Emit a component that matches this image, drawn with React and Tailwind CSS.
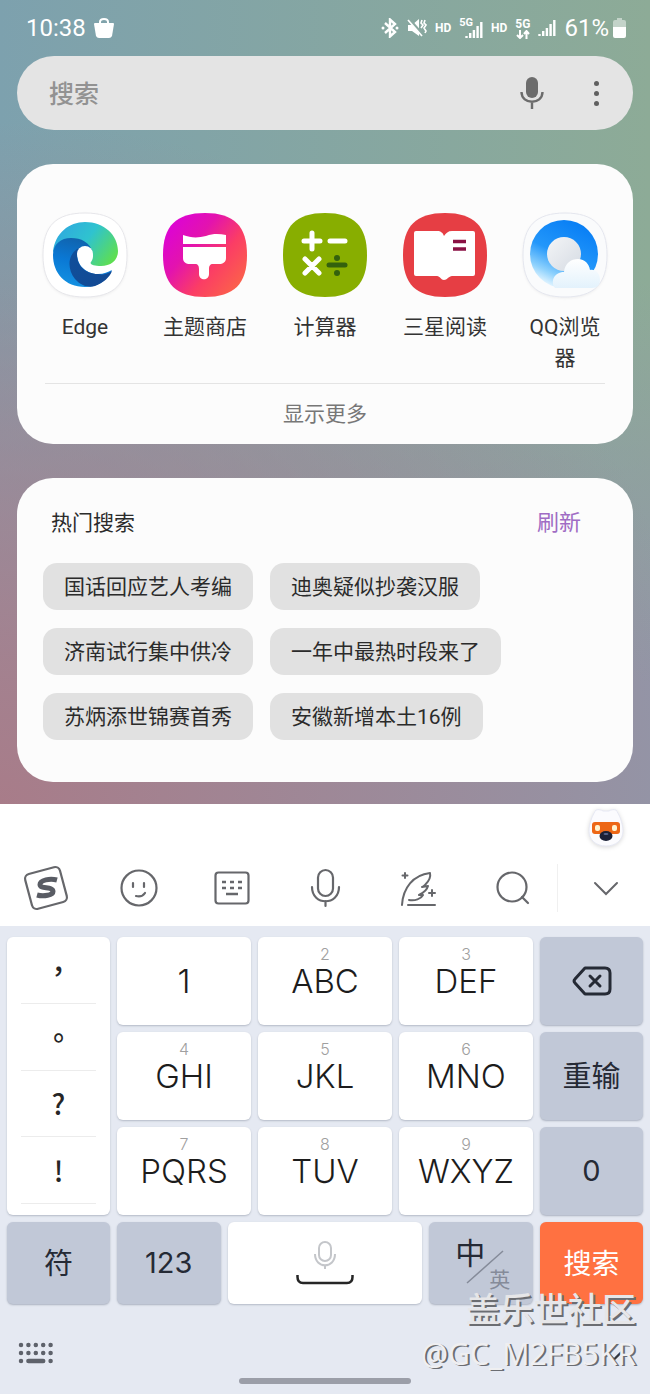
import React, { useState } from "react";
import { ChevronDown } from "lucide-react";

const SQUIRCLE = "M42 0C71 0 84 13 84 42S71 84 42 84 0 71 0 42 13 0 42 0Z";

const EdgeIcon = () => (
  <svg viewBox="0 0 84 84" className="size-[84px] overflow-visible drop-shadow-xs" aria-hidden="true">
    <defs>
      <linearGradient id="edgeTop" x1="0" y1="0.2" x2="1" y2="0.7">
        <stop offset="0" stopColor="#2fa8e0" />
        <stop offset="0.5" stopColor="#2fc3cf" />
        <stop offset="1" stopColor="#5ede52" />
      </linearGradient>
      <linearGradient id="edgeWave" x1="0.6" y1="0" x2="0.3" y2="1">
        <stop offset="0" stopColor="#1160a8" />
        <stop offset="0.5" stopColor="#0a78d4" />
        <stop offset="1" stopColor="#1492e2" />
      </linearGradient>
      <linearGradient id="edgeDeep" x1="0" y1="0" x2="1" y2="0.6">
        <stop offset="0" stopColor="#0f4f9b" />
        <stop offset="1" stopColor="#134a94" />
      </linearGradient>
    </defs>
    <path d={SQUIRCLE} fill="#fff" stroke="#e6e6ea" />
    <path
      d="M10 39C12 20 26 9 42 9C61 9 75 22 75 38C75 48 67 53 58 53C51 53 46 51 48 49C50 46 50 44 50 42L42 30L20 30Z"
      fill="url(#edgeTop)"
    />
    <path
      d="M10 42C10 31 18 25 28 25C38 25 47 29 50 40C48 33 38 32 35 39C32 50 42 61 55 61C61 61 65 59 69 57C64 68 54 74 42 74C22 74 10 60 10 42Z"
      fill="url(#edgeWave)"
    />
    <path
      d="M38 34C25 39 23 55 32 66C38 73 46 75 52 73C60 70 67 64 69 58C64 61 60 62 55 61C42 61 34 52 34 42C34 38 36 36 38 34Z"
      fill="url(#edgeDeep)"
    />
    <circle cx="42" cy="41" r="8" fill="#fff" />
  </svg>
);

const ThemesIcon = () => (
  <svg viewBox="0 0 84 84" className="size-[84px]" aria-hidden="true">
    <defs>
      <linearGradient id="themes" x1="0.1" y1="0.2" x2="0.9" y2="0.85">
        <stop offset="0" stopColor="#dd06cf" />
        <stop offset="0.3" stopColor="#e313ae" />
        <stop offset="0.65" stopColor="#fb3d65" />
        <stop offset="1" stopColor="#fb5f4c" />
      </linearGradient>
    </defs>
    <path d={SQUIRCLE} fill="url(#themes)" />
    <path d="M20 22C28 25 35 25 43 23C51 20 57 21 63 22V31H20Z" fill="#fff" />
    <path
      d="M20 34H63V45C63 49 60 51 56 51H50C47 51 46 53 46 56V61C46 68 36 68 36 61V56C36 53 35 51 32 51H27C23 51 20 49 20 45Z"
      fill="#fff"
    />
  </svg>
);

const CalculatorIcon = () => (
  <svg viewBox="0 0 84 84" className="size-[84px]" fill="none" strokeWidth="5" strokeLinecap="round" aria-hidden="true">
    <path d={SQUIRCLE} fill="#88ae00" />
    <path d="M21 28H37M29 20V36M47 28H62M22 46L36 60M36 46L22 60" stroke="#fff" />
    <path d="M46 52H62" stroke="#34610d" />
    <circle cx="54" cy="45" r="3" fill="#34610d" />
    <circle cx="54" cy="60" r="3" fill="#34610d" />
  </svg>
);

const ReaderIcon = () => (
  <svg viewBox="0 0 84 84" className="size-[84px]" aria-hidden="true">
    <path d={SQUIRCLE} fill="#e63e44" />
    <path
      d="M13 18H34C38 18 40 20 41 23C43 20 45 18 49 18H70Q72 18 72 20V61Q72 63 70 63H49C46 63 44 67 41 67C38 67 37 63 34 63H13Q11 63 11 61V20Q11 18 13 18Z"
      fill="#fff"
    />
    <path d="M50 28.5H63M50 36H63" stroke="#8a1144" strokeWidth="3.5" />
  </svg>
);

const QQIcon = () => (
  <svg viewBox="0 0 84 84" className="size-[84px] overflow-visible drop-shadow-xs" aria-hidden="true">
    <defs>
      <linearGradient id="qqRing" x1="0.75" y1="0.1" x2="0.3" y2="1">
        <stop offset="0" stopColor="#0a80f5" />
        <stop offset="0.5" stopColor="#2397fa" />
        <stop offset="0.8" stopColor="#8fd2fd" />
        <stop offset="1" stopColor="#f0faff" />
      </linearGradient>
      <linearGradient id="qqSun" x1="0" y1="0" x2="1" y2="1">
        <stop offset="0" stopColor="#f4f5f7" />
        <stop offset="1" stopColor="#d5dbe3" />
      </linearGradient>
      <linearGradient id="qqCloud" x1="0.5" y1="0" x2="0.5" y2="1">
        <stop offset="0" stopColor="#fff" />
        <stop offset="1" stopColor="#e3f2fc" />
      </linearGradient>
    </defs>
    <path d={SQUIRCLE} fill="#fafbfc" stroke="#e4e6ee" />
    <circle cx="41" cy="41" r="34" fill="url(#qqRing)" />
    <circle cx="41" cy="41" r="17" fill="url(#qqSun)" />
    <path
      d="M32 75C27 69 31 59 41 59C42 50 48 46 55 46C62 46 66 51 67 57C73 56 77 61 77 67C77 72 74 75 69 75Z"
      fill="url(#qqCloud)"
    />
  </svg>
);

const SignalBars = ({ className }) => (
  <svg viewBox="0 0 18 18" className={className} stroke="#fff" strokeWidth="2.4" aria-hidden="true">
    <path d="M1.5 17V15M5.2 17V12M8.9 17V9M12.6 17V5M16.3 17V1" />
  </svg>
);

const StatusBar = () => (
  <div className="flex h-14 items-center justify-between pr-6 pl-[26px] text-white">
    <div className="flex items-center gap-2">
      <span className="text-2xl">10:38</span>
      <svg viewBox="0 0 20 22" className="h-[22px] w-5" aria-hidden="true">
        <path d="M6 8V5Q6 2 10 2Q14 2 14 5V8" fill="none" stroke="#fff" strokeWidth="2" />
        <path d="M1 6H19Q20 6 20 7L18 19Q17 21 15 21H5Q3 21 2 19L0 7Q0 6 1 6Z" fill="#fff" />
      </svg>
    </div>
    <div className="flex items-center gap-2 text-xs font-bold">
      <svg viewBox="0 0 18 20" className="h-5 w-[18px]" fill="none" stroke="#fff" strokeWidth="2.4" aria-hidden="true">
        <path d="M4 5L14 14L9 18.5V1.5L14 6L4 15" />
        <circle cx="2" cy="10" r="1.5" fill="#fff" stroke="none" />
        <circle cx="16" cy="10" r="1.5" fill="#fff" stroke="none" />
      </svg>
      <svg viewBox="0 0 20 20" className="size-5" aria-hidden="true">
        <path d="M1 7H5L12 1V18L5 13H1Z" fill="#fff" />
        <path d="M2 1L14 15" stroke="#8aa8a0" strokeWidth="3" />
        <path d="M1 2L15 18" stroke="#fff" strokeWidth="1.6" />
        <path d="M15 2L14 5L16 7L14 10M18 2L17 5L19 7L17 10L19 13L18 15" fill="none" stroke="#fff" strokeWidth="1.6" />
      </svg>
      <span>HD</span>
      <span className="flex items-end">
        <span className="self-start text-[11px] leading-3">5G</span>
        <SignalBars className="-ml-2 mt-1 size-[18px]" />
      </span>
      <span>HD</span>
      <span className="flex flex-col items-center">
        <span className="text-xs leading-3">5G</span>
        <svg viewBox="0 0 14 9" className="h-[9px] w-3.5" fill="none" stroke="#fff" strokeWidth="2" aria-hidden="true">
          <path d="M4 0V8M1 5L4 8L7 5M10.5 9V1M8 4L10.5 1L13 4" />
        </svg>
      </span>
      <SignalBars className="size-[18px]" />
      <span className="flex items-center gap-1">
        <span className="text-2xl font-normal">61%</span>
        <svg viewBox="0 0 13 20" className="h-5 w-[13px]" aria-hidden="true">
          <path d="M4 0H9V2H11Q13 2 13 4V10H0V4Q0 2 2 2H4Z" fill="#c3d3c9" />
          <path d="M0 9H13V18Q13 20 11 20H2Q0 20 0 18Z" fill="#fff" />
        </svg>
      </span>
    </div>
  </div>
);

const SearchBar = () => {
  const [query, setQuery] = useState("");

  return (
    <div className="flex h-[74px] items-center rounded-full bg-[#e4e4e4] pr-[27px] pl-8">
      <input
        type="text"
        aria-label="搜索"
        placeholder="搜索"
        value={query}
        onChange={(e) => setQuery(e.target.value)}
        className="min-w-0 flex-1 bg-transparent pt-1 text-[25px] font-medium text-[#333] outline-none placeholder:text-[#929292]"
      />
      <button aria-label="语音" className="mr-[42px]">
        <svg viewBox="0 0 24 34" className="h-[34px] w-6" aria-hidden="true">
          <rect x="6" y="1" width="12" height="21" rx="6" fill="#6c6c6c" />
          <path d="M1.5 16C1.5 29 22.5 29 22.5 16M12 26V33" fill="none" stroke="#6c6c6c" strokeWidth="2.4" />
        </svg>
      </button>
      <button aria-label="更多" className="flex w-5 flex-col items-center gap-[5px]">
        <span className="size-[5px] rounded-full bg-[#606060]" />
        <span className="size-[5px] rounded-full bg-[#606060]" />
        <span className="size-[5px] rounded-full bg-[#606060]" />
      </button>
    </div>
  );
};

const apps = [
  { name: "Edge", Icon: EdgeIcon },
  { name: "主题商店", Icon: ThemesIcon },
  { name: "计算器", Icon: CalculatorIcon },
  { name: "三星阅读", Icon: ReaderIcon },
  { name: "QQ浏览器", Icon: QQIcon },
];

const AppsCard = () => (
  <section className="rounded-[36px] bg-[#fcfcfc] px-2 pt-[49px] pb-[14px]">
    <div className="grid grid-cols-5">
      {apps.map(({ name, Icon }) => (
        <button key={name} className="flex flex-col items-center gap-[15px]">
          <Icon />
          <span className="w-[84px] text-center text-[21px] leading-[31px] text-[#333]">{name}</span>
        </button>
      ))}
    </div>
    <div className="mx-5 mt-[9px] border-t border-[#e4e4e4] pt-[14px] text-center">
      <button className="text-[21px] leading-8 text-[#777]">显示更多</button>
    </div>
  </section>
);

const hotSearches = [
  ["国话回应艺人考编", "迪奥疑似抄袭汉服"],
  ["济南试行集中供冷", "一年中最热时段来了"],
  ["苏炳添世锦赛首秀", "安徽新增本土16例"],
];

const HotSearchCard = () => (
  <section className="rounded-[36px] bg-[#fcfcfc] px-[26px] pt-[29px] pb-[42px]">
    <div className="flex items-center justify-between pr-[26px] pl-2">
      <h2 className="text-[21px] leading-8 text-[#2b2b2b]">热门搜索</h2>
      <button className="text-[22px] leading-8 text-[#a06cc4]">刷新</button>
    </div>
    <div className="mt-6 flex flex-col gap-[18px]">
      {hotSearches.map((row) => (
        <div key={row[0]} className="flex gap-[17px]">
          {row.map((text) => (
            <button key={text} className="h-[47px] rounded-[14px] bg-[#e1e1e1] px-[21px] pt-[3px] text-[21px] text-[#2b2b2b]">
              {text}
            </button>
          ))}
        </div>
      ))}
    </div>
  </section>
);

const Mascot = () => (
  <svg viewBox="0 0 36 40" className="h-10 w-9 overflow-visible drop-shadow-sm" aria-hidden="true">
    <path
      d="M8 2C10 1 14 2 15 3H21C22 2 26 1 28 2C31 6 35 15 35 23C35 32 28 38 18 38S1 32 1 23C1 15 5 6 8 2Z"
      fill="#fbfbfe"
      stroke="#e6e8f3"
    />
    <rect x="4" y="14" width="28" height="12" rx="3" fill="#ed6716" />
    <rect x="7" y="17" width="5" height="6" rx="2" fill="#fff3d0" />
    <rect x="24" y="17" width="5" height="6" rx="2" fill="#fff3d0" />
    <ellipse cx="18" cy="28" rx="6.5" ry="5" fill="#1b2036" />
    <ellipse cx="18" cy="26" rx="2.5" ry="1" fill="#59678f" />
  </svg>
);

const toolIcon = "size-12";

const tools = [
  {
    label: "搜狗",
    icon: (
      <svg viewBox="0 0 48 48" className={toolIcon} fill="none" stroke="#66676b" strokeWidth="2.2" aria-hidden="true">
        <rect x="6" y="6" width="36" height="36" rx="5" transform="rotate(-15 24 24)" />
        <path
          d="M35 16C28 14 18 16 18 20.5C18 25.5 31 22 31 27.5C31 31 22 33 15 31"
          stroke="#595c64"
          strokeWidth="5"
        />
      </svg>
    ),
  },
  {
    label: "表情",
    icon: (
      <svg viewBox="0 0 48 48" className={toolIcon} fill="none" stroke="#66676b" strokeWidth="2.2" aria-hidden="true">
        <circle cx="24" cy="24" r="17.5" />
        <path d="M18 19V23M29 19V23M21 32C25 33 28 32 30 29" strokeLinecap="round" />
      </svg>
    ),
  },
  {
    label: "键盘",
    icon: (
      <svg viewBox="0 0 48 48" className={toolIcon} fill="none" stroke="#66676b" strokeWidth="2.2" aria-hidden="true">
        <rect x="7.5" y="8.5" width="33" height="31" rx="3" />
        <path d="M14 18H18M22 18H26M30 18H34M14 24H18M22 24H26M30 24H34M18 30H30" strokeWidth="2.5" />
      </svg>
    ),
  },
  {
    label: "语音输入",
    icon: (
      <svg viewBox="0 0 48 48" className={toolIcon} fill="none" stroke="#66676b" strokeWidth="2.2" aria-hidden="true">
        <rect x="17" y="6" width="15" height="26" rx="7.5" />
        <path d="M11 23C11 42 38 42 38 23M24.5 37V42" strokeLinecap="round" />
      </svg>
    ),
  },
  {
    label: "写作",
    icon: (
      <svg
        viewBox="0 0 48 48"
        className={toolIcon}
        fill="none"
        stroke="#66676b"
        strokeWidth="2"
        strokeLinecap="round"
        strokeLinejoin="round"
        aria-hidden="true"
      >
        <path d="M8 41C9 24 19 11 36 9C37 13 35 17 31 21C30 22 29 23 28 23L34 22C33 26 29 29 25 31L29 31C27 35 21 37 15 36" />
        <path d="M14 41H41M11 9V14M8.5 11.5H13.5M38 26V32M35 29H41" />
      </svg>
    ),
  },
  {
    label: "查找",
    icon: (
      <svg viewBox="0 0 48 48" className={toolIcon} fill="none" stroke="#66676b" strokeWidth="2.2" aria-hidden="true">
        <circle cx="25" cy="23" r="14.5" />
        <path d="M35 33L41 39" strokeLinecap="round" />
      </svg>
    ),
  },
  {
    label: "收起",
    icon: (
      <svg viewBox="0 0 48 48" className={toolIcon} fill="none" stroke="#66676b" strokeWidth="2" aria-hidden="true">
        <path d="M15 19L26 30L37 19" strokeLinecap="round" />
      </svg>
    ),
  },
];

const Toolbar = () => (
  <div className="bg-white pt-1 pb-[14px]">
    <div className="flex h-10 justify-end pr-[26px]">
      <Mascot />
    </div>
    <div className="mt-4 grid grid-cols-7">
      {tools.map(({ label, icon }, i) => (
        <button
          key={label}
          aria-label={label}
          className={`flex items-center justify-center ${i === tools.length - 1 ? "border-l border-[#f0f0f0]" : ""}`}
        >
          {icon}
        </button>
      ))}
    </div>
  </div>
);

const letterRows = [
  [["", "1"], ["2", "ABC"], ["3", "DEF"]],
  [["4", "GHI"], ["5", "JKL"], ["6", "MNO"]],
  [["7", "PQRS"], ["8", "TUV"], ["9", "WXYZ"]],
];

const LetterKey = ({ hint, label }) => (
  <button className="flex h-[88px] flex-col items-center rounded-md bg-white pt-[9px] font-['Inter','Noto_Sans_CJK_SC',sans-serif] text-[#1c1c1c] shadow-[0_1px_2px_#b4bac6]">
    <span className="h-4 text-base leading-4 font-light text-[#a0a0a0]">{hint}</span>
    <span className="text-[33px] leading-[38px] font-light">{label}</span>
  </button>
);

const GrayKey = ({ label, children }) => (
  <button
    aria-label={label}
    className="flex items-center justify-center rounded-md bg-[#c1c8d7] text-[29px] text-[#252a35] shadow-[0_1px_2px_#aab1bf]"
  >
    {children}
  </button>
);

const Keyboard = () => (
  <div className="flex flex-col gap-[7px] bg-[#e5e9f2] px-[7px] pt-[11px]">
    <div className="grid grid-cols-[103fr_134fr_134fr_134fr_103fr] gap-[7px]">
      <div className="row-span-3 flex flex-col rounded-md bg-white px-[14px] pb-[11px] font-['Noto_Sans_CJK_TC',sans-serif] text-[28px] text-[#262626] shadow-[0_1px_2px_#b4bac6]">
        {["，", "。", "?", "!"].map((mark) => (
          <button key={mark} lang="zh-TW" className="flex-1 border-b border-[#ececec] leading-none font-medium">
            {mark}
          </button>
        ))}
      </div>
      {letterRows.map((row, i) => (
        <React.Fragment key={row[0][1]}>
          {row.map(([hint, label]) => (
            <LetterKey key={label} hint={hint} label={label} />
          ))}
          {i === 0 && (
            <GrayKey label="删除">
              <svg viewBox="0 0 40 30" className="h-[30px] w-10" fill="none" stroke="#252a35" strokeWidth="3" aria-hidden="true">
                <path d="M13 2H33Q38 2 38 7V23Q38 28 33 28H13L3 17Q1 15 3 13Z" strokeLinejoin="round" />
                <path d="M18 10L28 20M28 10L18 20" strokeLinecap="round" />
              </svg>
            </GrayKey>
          )}
          {i === 1 && (
            <GrayKey>
              <span className="pt-1">重输</span>
            </GrayKey>
          )}
          {i === 2 && (
            <GrayKey>
              <span className="font-['Inter',sans-serif]">0</span>
            </GrayKey>
          )}
        </React.Fragment>
      ))}
    </div>

    <div className="grid h-[82px] grid-cols-[103fr_104fr_195fr_104fr_103fr] gap-[7px]">
      <GrayKey>
        <span className="pt-1">符</span>
      </GrayKey>
      <GrayKey>
        <span className="font-['Inter',sans-serif]">123</span>
      </GrayKey>
      <button
        aria-label="空格"
        className="flex flex-col items-center justify-center gap-1 rounded-md bg-white shadow-[0_1px_2px_#b4bac6]"
      >
        <svg viewBox="0 0 24 30" className="h-[30px] w-6" fill="none" stroke="#c4c6ca" strokeWidth="2" aria-hidden="true">
          <rect x="6" y="1" width="12" height="19" rx="6" />
          <path d="M2 13C2 28 22 28 22 13M12 24V28" />
        </svg>
        <svg viewBox="0 0 58 10" className="h-[10px] w-[58px]" fill="none" stroke="#262626" strokeWidth="2.5" aria-hidden="true">
          <path d="M1.5 0V2Q1.5 8 7 8H51Q56.5 8 56.5 2V0" />
        </svg>
      </button>
      <GrayKey>
        <span className="relative flex h-full w-full">
          <span className="absolute top-[10px] left-[26px] text-[30px] leading-[44px]">中</span>
          <svg viewBox="0 0 38 34" className="absolute top-7 left-[37px] h-[34px] w-[38px]" stroke="#858b99" strokeWidth="1.5" aria-hidden="true">
            <path d="M1 33L37 1" />
          </svg>
          <span className="absolute top-[44px] left-[60px] text-[21px] leading-7 text-[#858b99]">英</span>
        </span>
      </GrayKey>
      <button className="rounded-md bg-[#ff7141] pt-1 text-[28px] text-white shadow-[0_1px_2px_#aab1bf]">搜索</button>
    </div>

    <div className="relative flex h-[83px] items-start justify-between px-[11px] pt-[31px]">
      <button aria-label="切换键盘">
        <svg viewBox="0 0 36 22" className="h-[22px] w-9" stroke="#5e626b" strokeWidth="4.5" strokeLinecap="round" aria-hidden="true">
          <path d="M3 3H3.01M10.4 3H10.41M17.8 3H17.81M25.2 3H25.21M32.6 3H32.61M3 11H3.01M10.4 11H10.41M17.8 11H17.81M25.2 11H25.21M32.6 11H32.61M3 19H3.01M10.4 19H25.2M32.6 19H32.61" />
        </svg>
      </button>
      <button aria-label="隐藏键盘" className="pr-1">
        <ChevronDown className="size-7 text-[#33363d]" />
      </button>
      <div className="absolute bottom-[10px] left-1/2 h-[6px] w-[172px] -translate-x-1/2 rounded-full bg-[#9b9ea8]" />
    </div>
  </div>
);

const Watermark = () => (
  <div className="pointer-events-none absolute right-[14px] bottom-[18px] flex flex-col items-end font-['Noto_Sans','Noto_Sans_CJK_SC',sans-serif] whitespace-nowrap">
    <span className="text-[34px] leading-[46px] font-medium text-[#e6e6e8] [text-shadow:2px_2px_0_#6b6d72]">盖乐世社区</span>
    <span className="text-[30px] leading-[44px] text-[#efeff1] [text-shadow:2px_1px_0_#6b6d72]">@GC_M2FB5KR</span>
  </div>
);

const App = () => (
  <div className="relative w-full font-['Roboto','Noto_Sans_CJK_SC',sans-serif]" lang="zh-CN">
    <main className="bg-[radial-gradient(110%_85%_at_0%_100%,#a87c89,transparent),linear-gradient(to_bottom,transparent_35%,#9296a8_85%),linear-gradient(to_right,#7da1ae,#8dab97)] pb-[22px]">
      <StatusBar />
      <div className="flex flex-col gap-[34px] px-[17px]">
        <SearchBar />
        <AppsCard />
        <HotSearchCard />
      </div>
    </main>
    <Toolbar />
    <Keyboard />
    <Watermark />
  </div>
);

export default App;
